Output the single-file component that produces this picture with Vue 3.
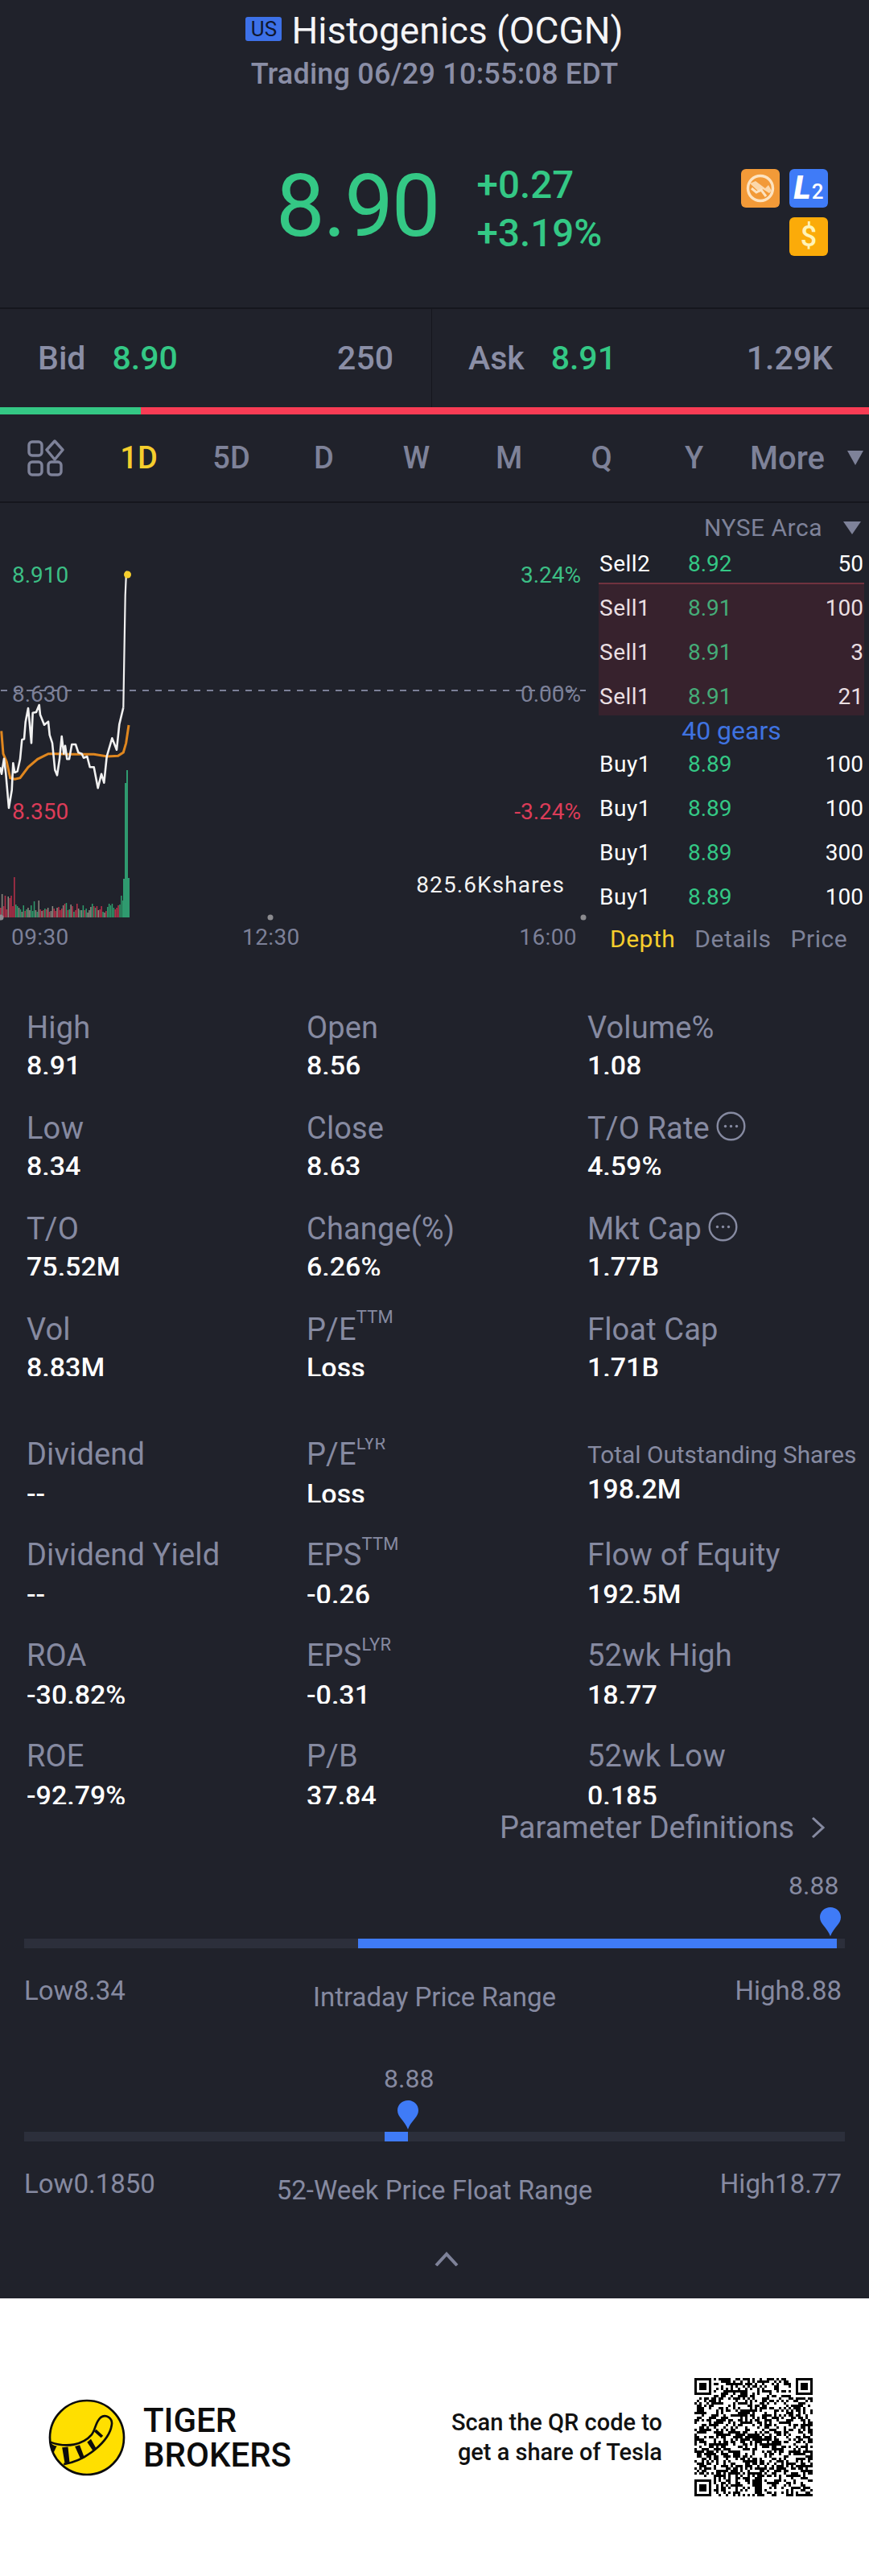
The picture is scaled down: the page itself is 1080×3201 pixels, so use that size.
<script setup>
const tabs = ['1D', '5D', 'D', 'W', 'M', 'Q', 'Y']

const sells = [
  ['Sell1', '8.91', '100'],
  ['Sell1', '8.91', '3'],
  ['Sell1', '8.91', '21'],
]
const buys = [
  ['Buy1', '8.89', '100'],
  ['Buy1', '8.89', '100'],
  ['Buy1', '8.89', '300'],
  ['Buy1', '8.89', '100'],
]

const group1 = [
  { l: 'High', v: '8.91' }, { l: 'Open', v: '8.56' }, { l: 'Volume%', v: '1.08' },
  { l: 'Low', v: '8.34' }, { l: 'Close', v: '8.63' }, { l: 'T/O Rate', v: '4.59%', info: true },
  { l: 'T/O', v: '75.52M' }, { l: 'Change(%)', v: '6.26%' }, { l: 'Mkt Cap', v: '1.77B', info: true },
  { l: 'Vol', v: '8.83M' }, { l: 'P/E', sup: 'TTM', v: 'Loss' }, { l: 'Float Cap', v: '1.71B' },
]
const group2 = [
  { l: 'Dividend', v: '--' }, { l: 'P/E', sup: 'LYR', v: 'Loss' }, { l: 'Total Outstanding Shares', v: '198.2M', small: true },
  { l: 'Dividend Yield', v: '--' }, { l: 'EPS', sup: 'TTM', v: '-0.26' }, { l: 'Flow of Equity', v: '192.5M' },
  { l: 'ROA', v: '-30.82%' }, { l: 'EPS', sup: 'LYR', v: '-0.31' }, { l: '52wk High', v: '18.77' },
  { l: 'ROE', v: '-92.79%' }, { l: 'P/B', v: '37.84' }, { l: '52wk Low', v: '0.185' },
]

const ranges = [
  { value: '8.88', valueLeft: 950, left: 415, width: 595, pin: 989, low: 'Low8.34', title: 'Intraday Price Range', high: 'High8.88' },
  { value: '8.88', valueLeft: 447, left: 448, width: 29, pin: 464, low: 'Low0.1850', title: '52-Week Price Float Range', high: 'High18.77' },
]

// Chart traces, measured in a 3x crop whose origin is (0, 820)
const toPts = (a) => a.map(([x, y]) => `${(x / 3).toFixed(1)},${(820 + y / 3).toFixed(1)}`).join(' ')
const white = toPts([
  [0, 400], [6, 425], [15, 368], [22, 425], [33, 552], [44, 485], [49, 385], [55, 420], [65, 415], [75, 370], [82, 298],
  [90, 295], [95, 232], [105, 180], [110, 232], [117, 310], [122, 197], [135, 195], [146, 168], [150, 205], [165, 242],
  [180, 230], [185, 280], [195, 310], [205, 410], [213, 430], [222, 370], [230, 285], [238, 350], [243, 320], [250, 370],
  [258, 370], [268, 315], [282, 315], [292, 345], [305, 350], [312, 365], [325, 360], [335, 400], [350, 400], [365, 478],
  [378, 425], [388, 458], [398, 360], [418, 292], [435, 335], [445, 240], [460, 178],
])
const spike = toPts([[460, 178], [463, 0], [467, -240], [471, -330], [476, -318]])
const orange = toPts([
  [5, 265], [12, 350], [25, 380], [38, 440], [55, 445], [75, 440], [105, 400], [140, 370], [180, 350], [210, 350],
  [260, 352], [300, 352], [350, 352], [400, 360], [440, 358], [460, 345], [470, 310], [480, 243],
])

const volH = [12, 29, 14, 27, 10, 26, 24, 27, 14, 50, 16, 14, 12, 10, 7, 15, 8, 10, 12, 9, 15, 8, 20, 9, 7, 21, 10, 8, 9,
  11, 10, 12, 7, 8, 14, 11, 8, 12, 13, 9, 11, 15, 17, 18, 9, 10, 16, 14, 7, 9, 17, 11, 9, 9, 15, 9, 11, 6, 9, 13, 17,
  14, 12, 14, 9, 10, 14, 7, 6, 8, 13, 17, 15, 17, 12, 10, 12, 15, 16, 27, 21, 38]
const volC = 'rprrrprrrrggpgpgrgppgggpgprprgrprpprrprrrprgrgprgrrpgpgrgpppgrgrprrgprgggggrrrggg'
const colors = { r: '#b9304a', g: '#2e9c6c', p: '#8d8a80' }
const bars = volH.map((h, i) => ({
  x: i * 1.9,
  y: 1140 - h,
  h,
  fill: colors[volC[i] || 'g'],
}))
const bigBars = [
  { x: 153, y: 1092, h: 48 },
  { x: 155, y: 973, h: 167 },
  { x: 157, y: 957, h: 183 },
  { x: 159, y: 1091, h: 49 },
]

// QR drawn from a seeded generator plus the three finder squares
const N = 49
let seed = 20210629
const rnd = () => {
  seed = (seed * 1664525 + 1013904223) >>> 0
  return (seed >>> 16) / 65536
}
let qrPath = ''
const finder = (fx, fy, x, y) => {
  const dx = x - fx
  const dy = y - fy
  if (dx < -1 || dy < -1 || dx > 7 || dy > 7) return null
  if (dx < 0 || dy < 0 || dx > 6 || dy > 6) return false
  if (dx === 0 || dy === 0 || dx === 6 || dy === 6) return true
  if (dx === 1 || dy === 1 || dx === 5 || dy === 5) return false
  return true
}
for (let y = 0; y < N; y++) {
  for (let x = 0; x < N; x++) {
    let on = finder(0, 0, x, y)
    if (on === null) on = finder(N - 7, 0, x, y)
    if (on === null) on = finder(0, N - 7, x, y)
    if (on === null) on = rnd() > 0.5
    if (on) qrPath += `M${x} ${y}h1v1h-1z`
  }
}
</script>

<template>
  <div class="page">
    <div class="dark">
      <header class="head">
        <div class="title">
          <span class="badge">US</span>
          <span>Histogenics (OCGN)</span>
        </div>
        <div class="sub">Trading 06/29 10:55:08 EDT</div>
      </header>

      <section class="quote">
        <div class="price">8.90</div>
        <div class="change">
          <div>+0.27</div>
          <div>+3.19%</div>
        </div>
        <div class="badges">
          <span class="ico ico-o">
            <svg width="48" height="48" viewBox="0 0 48 48">
              <circle cx="24" cy="24" r="15.500" fill="none" stroke="#fde3c0" stroke-width="3.400" />
              <path d="M11 18l7-3 12 9 4-4 4 7-3 3-8-5-4 4z" fill="#fde3c0" opacity=".85" />
              <path d="M13 24l6 5 6-3 6 8" fill="none" stroke="#fde3c0" stroke-width="3" />
            </svg>
          </span>
          <span class="ico ico-l"><i>L</i><b>2</b></span>
          <span class="ico ico-gap"></span>
          <span class="ico ico-s">$</span>
        </div>
      </section>

      <section class="bidask">
        <div class="cell cell-l">
          <span class="ba-l">Bid</span><span class="ba-p">8.90</span><span class="ba-q">250</span>
        </div>
        <div class="cell cell-r">
          <span class="ba-l">Ask</span><span class="ba-p">8.91</span><span class="ba-q">1.29K</span>
        </div>
      </section>
      <div class="ratio"><div class="ratio-g"></div><div class="ratio-r"></div></div>

      <nav class="tabs">
        <div class="tab-ico">
          <svg width="48" height="46" viewBox="0 0 48 46" fill="none" stroke="#7e8299" stroke-width="3.400">
            <rect x="3" y="3" width="16" height="17" rx="4" />
            <path d="M35 2l10 11-10 12-10-12z" stroke-linejoin="round" />
            <rect x="3" y="28" width="16" height="16" rx="4" />
            <rect x="27" y="28" width="16" height="16" rx="4" />
          </svg>
        </div>
        <div v-for="(t, i) in tabs" :key="t" class="tab" :class="{ on: i === 0 }">{{ t }}</div>
        <div class="more">More<span class="tri tri-more"></span></div>
      </nav>

      <section class="market">
        <div class="chart">
          <svg class="plot" width="744" height="575" viewBox="0 625 744 575">
            <line x1="0" y1="858" x2="728" y2="858" stroke="#7c8098" stroke-width="2" stroke-dasharray="8 8" stroke-dashoffset="-1" />
            <rect v-for="(b, i) in bars" :key="i" :x="b.x" :y="b.y" width="1.500" :height="b.h" :fill="b.fill" />
            <rect v-for="b in bigBars" :key="b.x" :x="b.x" :y="b.y" width="2" :height="b.h" fill="#2f9a6f" />
            <polyline :points="orange" fill="none" stroke="#e0871f" stroke-width="3" />
            <polyline :points="white" fill="none" stroke="#f1f1f1" stroke-width="2.600" stroke-linejoin="round" />
            <polyline :points="spike" fill="none" stroke="#f1f1f1" stroke-width="2.200" />
            <circle cx="158.500" cy="714" r="4.500" fill="#f5ce2d" />
            <circle cx="1" cy="1140" r="3.500" fill="#8b8b8f" />
            <circle cx="336" cy="1140" r="3.500" fill="#8b8b8f" />
            <circle cx="725" cy="1140" r="3.500" fill="#8b8b8f" />
          </svg>
          <span class="lbl up a1">8.910</span>
          <span class="lbl up a2">3.24%</span>
          <span class="lbl gr a3">8.630</span>
          <span class="lbl gr a4">0.00%</span>
          <span class="lbl dn a5">8.350</span>
          <span class="lbl dn a6">-3.24%</span>
          <span class="lbl wh a7">825.6Kshares</span>
          <span class="lbl gr t1">09:30</span>
          <span class="lbl gr t2">12:30</span>
          <span class="lbl gr t3">16:00</span>
        </div>

        <aside class="depth">
          <div class="d-head">NYSE Arca<span class="tri tri-ny"></span></div>
          <div class="d-row d-top">
            <span class="d-l">Sell2</span><span class="d-p">8.92</span><span class="d-q">50</span>
          </div>
          <div class="d-sells">
            <div v-for="(r, i) in sells" :key="i" class="d-row">
              <span class="d-l">{{ r[0] }}</span><span class="d-p">{{ r[1] }}</span><span class="d-q">{{ r[2] }}</span>
            </div>
          </div>
          <div class="gears">40 gears</div>
          <div v-for="(r, i) in buys" :key="'b' + i" class="d-row">
            <span class="d-l">{{ r[0] }}</span><span class="d-p">{{ r[1] }}</span><span class="d-q">{{ r[2] }}</span>
          </div>
          <div class="d-tabs">
            <span class="act">Depth</span><span>Details</span><span>Price</span>
          </div>
        </aside>
      </section>

      <section class="stats g1">
        <div v-for="(s, i) in group1" :key="i" class="stat">
          <div class="s-l">
            {{ s.l }}<sup v-if="s.sup">{{ s.sup }}</sup>
            <svg v-if="s.info" class="info" width="37" height="37" viewBox="0 0 37 37">
              <circle cx="18.500" cy="18.500" r="16.800" fill="none" stroke="#868aa1" stroke-width="2.400" />
              <circle cx="11.500" cy="18.500" r="1.700" fill="#868aa1" />
              <circle cx="18.500" cy="18.500" r="1.700" fill="#868aa1" />
              <circle cx="25.500" cy="18.500" r="1.700" fill="#868aa1" />
            </svg>
          </div>
          <div class="s-v">{{ s.v }}</div>
        </div>
      </section>

      <section class="stats g2">
        <div v-for="(s, i) in group2" :key="i" class="stat" :class="{ small: s.small }">
          <div class="s-l">{{ s.l }}<sup v-if="s.sup">{{ s.sup }}</sup></div>
          <div class="s-v">{{ s.v }}</div>
        </div>
      </section>

      <div class="param">
        Parameter Definitions
        <svg width="20" height="28" viewBox="0 0 20 28" fill="none" stroke="#868aa1" stroke-width="3">
          <path d="M3 2l13 12L3 26" />
        </svg>
      </div>

      <section v-for="(r, i) in ranges" :key="i" class="range">
        <div class="r-val" :style="{ marginLeft: r.valueLeft + 'px' }">{{ r.value }}</div>
        <div class="track">
          <div class="fill" :style="{ left: r.left + 'px', width: r.width + 'px' }"></div>
          <svg class="pin" :style="{ left: r.pin + 'px' }" width="26" height="36" viewBox="0 0 26 36">
            <path d="M13 36C9 25 0 21 0 12.500C0 5 6 0 13 0s13 5 13 12.500C26 21 17 25 13 36z" fill="#3f7bf7" />
          </svg>
        </div>
        <div class="r-labels">
          <span>{{ r.low }}</span>
          <span class="r-title">{{ r.title }}</span>
          <span class="r-high">{{ r.high }}</span>
        </div>
      </section>

      <div class="collapse">
        <svg width="30" height="18" viewBox="0 0 30 18" fill="none" stroke="#7e8299" stroke-width="4">
          <path d="M2 17L15 3l13 14" />
        </svg>
      </div>
    </div>

    <footer class="foot">
      <svg class="logo" width="96" height="96" viewBox="60 150 290 290">
        <circle cx="205" cy="295" r="139" fill="#ffdf00" stroke="#0c0c0c" stroke-width="8" />
        <path d="M68 312C130 335 190 322 222 285C238 265 236 238 256 220C276 205 303 222 298 248C290 305 205 382 118 395" fill="none" stroke="#0c0c0c" stroke-width="8" />
        <path d="M68 312C78 325 84 325 92 326L78 356z" fill="#0c0c0c" />
        <path d="M112 332l22-2 6 58-18 4z" fill="#0c0c0c" />
        <path d="M160 328l18-5 18 48-14 6z" fill="#0c0c0c" />
        <path d="M206 312l14-12 20 36-12 9z" fill="#0c0c0c" />
        <path d="M232 272l8-8 26 24-8 8z" fill="#0c0c0c" />
      </svg>
      <div class="brand">TIGER<br />BROKERS</div>
      <div class="scan">Scan the QR code to<br />get a share of Tesla</div>
      <svg class="qr" width="147" height="147" :viewBox="`0 0 ${N} ${N}`" shape-rendering="crispEdges">
        <path :d="qrPath" fill="#000" />
      </svg>
    </footer>
  </div>
</template>

<style scoped>
.page {
  width: 1080px;
  height: 3201px;
  overflow: hidden;
  font-family: Roboto, "Liberation Sans", sans-serif;
  background: #fff;
  color: #8a8ea6;
}
.dark {
  height: 2856px;
  background: #20222b;
  overflow: hidden;
}

.head {
  padding-top: 10px;
  text-align: center;
}
.title {
  height: 56px;
  line-height: 56px;
  font-size: 46px;
  color: #f5f5f7;
  display: flex;
  justify-content: center;
  align-items: center;
  gap: 12px;
}
.badge {
  width: 45px;
  height: 30px;
  margin-top: -4px;
  background: #3d71e8;
  border-radius: 3px;
  color: #10172e;
  font-size: 26px;
  line-height: 30px;
  text-align: center;
}
.sub {
  height: 52px;
  line-height: 52px;
  font-size: 36px;
  font-weight: 500;
  letter-spacing: .2px;
  color: #8a8ea6;
}

.quote {
  height: 266px;
  box-sizing: border-box;
  padding: 82px 51px 0 343px;
  display: flex;
  align-items: flex-start;
  border-bottom: 2px solid #15161d;
}
.price {
  font-size: 108px;
  line-height: 112px;
  letter-spacing: -2px;
  color: #34c885;
}
.change {
  margin-left: 47px;
  font-size: 47.500px;
  font-weight: 500;
  line-height: 60px;
  color: #34c885;
}
.badges {
  margin-left: auto;
  margin-top: 10px;
  display: grid;
  grid-template-columns: 48px 48px;
  gap: 12px;
}
.ico {
  width: 48px;
  height: 48px;
  border-radius: 6px;
  display: flex;
  align-items: center;
  justify-content: center;
  color: #fff;
}
.ico-gap {
  visibility: hidden;
}
.ico-o {
  background: #f29a38;
}
.ico-l {
  background: #3f7bf7;
  align-items: baseline;
  line-height: 48px;
}
.ico-l i {
  font-size: 40px;
  font-weight: 900;
}
.ico-l b {
  font-size: 26px;
  font-weight: 500;
  margin-left: 1px;
}
.ico-s {
  background: #fbab09;
  color: #fff3b8;
  font-size: 36px;
  font-weight: 500;
}

.bidask {
  display: flex;
  height: 122px;
}
.cell {
  display: flex;
  align-items: center;
  font-size: 41px;
  font-weight: 500;
  box-sizing: border-box;
}
.cell-l {
  width: 537px;
  padding: 0 47px;
  border-right: 1px solid #15161d;
}
.cell-r {
  flex: 1;
  padding: 0 45px;
}
.ba-p {
  margin-left: 33px;
  color: #34c885;
}
.ba-q {
  margin-left: auto;
}
.ratio {
  height: 9px;
  display: flex;
}
.ratio-g {
  width: 175px;
  background: #34c885;
}
.ratio-r {
  flex: 1;
  background: #f83c55;
}

.tabs {
  height: 110px;
  box-sizing: border-box;
  border-bottom: 2px solid #15161d;
  display: flex;
  align-items: center;
  font-size: 38px;
  font-weight: 500;
  color: #7e8299;
}
.tab-ico {
  width: 115px;
  padding-left: 33px;
  box-sizing: border-box;
  display: flex;
}
.tab {
  width: 115px;
  text-align: center;
}
.tab.on {
  color: #f5ce2d;
}
.more {
  margin-left: 12px;
  font-size: 40px;
  display: flex;
  align-items: center;
}
.tri {
  display: inline-block;
  width: 0;
  height: 0;
  border-top: 18px solid #7e8299;
  border-left: 10px solid transparent;
  border-right: 10px solid transparent;
}
.tri-more {
  margin-left: 28px;
}

.market {
  height: 575px;
  display: flex;
}
.chart {
  position: relative;
  width: 744px;
  height: 575px;
}
.plot {
  display: block;
}
.lbl {
  position: absolute;
  font-size: 28px;
  line-height: 32px;
  white-space: nowrap;
}
.up { color: #3cbf85; }
.dn { color: #dd3c58; }
.gr { color: #7c8098; }
.wh { color: #f3f3f3; }
.a1 { left: 15px; top: 74px; }
.a2 { right: 22px; top: 74px; }
.a3 { left: 15px; top: 222px; }
.a4 { right: 22px; top: 222px; }
.a5 { left: 15px; top: 368px; }
.a6 { right: 22px; top: 368px; }
.a7 { right: 42px; top: 459px; letter-spacing: 1.100px; }
.t1 { left: 14px; top: 524px; letter-spacing: .4px; }
.t2 { left: 301px; top: 524px; letter-spacing: .4px; }
.t3 { right: 27px; top: 524px; letter-spacing: .4px; }

.depth {
  width: 330px;
  font-size: 28px;
  color: #fff;
}
.d-head {
  height: 48px;
  box-sizing: border-box;
  padding: 14px 4px 0 0;
  line-height: 34px;
  font-size: 30px;
  letter-spacing: .5px;
  color: #7e8299;
  display: flex;
  justify-content: flex-end;
  align-items: center;
}
.tri-ny {
  margin-left: 26px;
  border-top-width: 16px;
  border-left-width: 11px;
  border-right-width: 11px;
}
.d-row {
  height: 55px;
  display: flex;
  align-items: center;
  padding: 0 1px;
}
.d-top {
  height: 51px;
  box-sizing: border-box;
  padding-top: 3px;
}
.d-l {
  width: 110px;
  letter-spacing: .5px;
}
.d-p {
  color: #34c885;
}
.d-q {
  margin-left: auto;
}
.d-sells {
  height: 165px;
  box-sizing: border-box;
  border-top: 2px solid #70323f;
  padding-top: 2px;
  background: #37222d;
  color: #eadfe2;
}
.d-sells .d-p {
  color: #45ac78;
}
.gears {
  height: 33px;
  box-sizing: border-box;
  padding-top: 6px;
  line-height: 27px;
  font-size: 32px;
  text-align: center;
  color: #3f73e0;
}
.d-tabs {
  height: 48px;
  display: flex;
  align-items: center;
  padding-left: 14px;
  gap: 24px;
  font-size: 30px;
  color: #7e8299;
  letter-spacing: .5px;
}
.d-tabs .act {
  color: #f5ce2d;
}

.stats {
  padding-left: 33px;
  display: grid;
  grid-template-columns: 348px 349px 1fr;
}
.g1 {
  margin-top: 55px;
}
.g2 {
  margin-top: 32px;
  height: 460px;
  overflow: hidden;
}
.stat {
  height: 125px;
}
.s-l {
  height: 45px;
  line-height: 45px;
  font-size: 38px;
  letter-spacing: .15px;
  color: #868aa1;
  white-space: nowrap;
  display: flex;
  align-items: center;
}
.g2 .s-l {
  line-height: 41px;
  align-items: flex-start;
}
.s-l sup {
  font-size: 22px;
  line-height: 22px;
  align-self: flex-start;
  margin-top: -4px;
}
.info {
  margin-left: 8px;
  margin-top: -6px;
}
.s-v {
  height: 35px;
  line-height: 49px;
  font-size: 34px;
  font-weight: 500;
  color: #fff;
  overflow: hidden;
}
.small .s-l {
  font-size: 29.800px;
  letter-spacing: 0;
}
.small .s-v {
  height: 47px;
  margin-top: -6px;
  overflow: visible;
}

.param {
  height: 48px;
  margin-right: 53px;
  font-size: 38px;
  color: #868aa1;
  display: flex;
  justify-content: flex-end;
  align-items: center;
  gap: 20px;
}

.range {
  padding: 0 30px;
  margin-top: 28px;
  font-size: 33px;
  color: #868aa1;
}
.range + .range {
  margin-top: 58px;
}
.r-val {
  height: 40px;
  line-height: 40px;
  font-size: 32px;
  margin-bottom: 46px;
}
.track {
  position: relative;
  height: 12px;
  background: #2c2f3b;
}
.fill {
  position: absolute;
  top: 0;
  bottom: 0;
  background: #3f7bf7;
}
.pin {
  position: absolute;
  bottom: 15px;
}
.r-labels {
  margin-top: 30px;
  display: grid;
  grid-template-columns: 1fr auto 1fr;
  line-height: 46px;
}
.r-title {
  margin-top: 8px;
}
.r-high {
  text-align: right;
  padding-right: 4px;
}

.collapse {
  padding-top: 53px;
  text-align: center;
  padding-left: 30px;
}

.foot {
  height: 345px;
  display: flex;
  align-items: center;
  padding: 0 70px 0 60px;
  background: #fff;
}
.logo {
  flex: none;
}
.brand {
  margin-left: 22px;
  font-size: 42px;
  font-weight: 500;
  line-height: 43px;
  color: #0c0c0c;
}
.scan {
  margin-left: auto;
  text-align: right;
  font-size: 29px;
  font-weight: 500;
  line-height: 37px;
  color: #111;
}
.qr {
  margin-left: 40px;
  flex: none;
}
</style>
